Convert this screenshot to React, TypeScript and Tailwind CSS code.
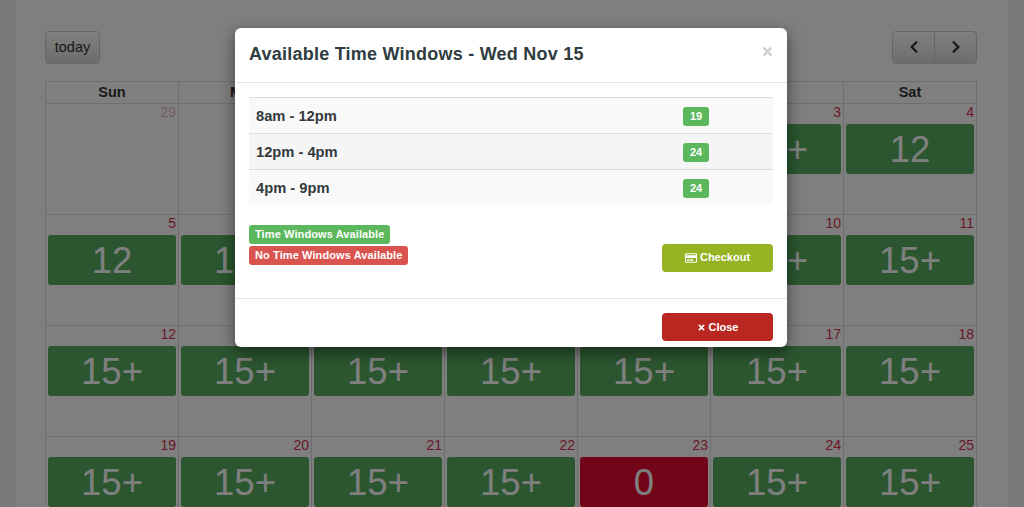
import { FaChevronLeft, FaChevronRight, FaRegCreditCard, FaTimes } from "react-icons/fa";

const heads = ["Sun", "Mon", "Tue", "Wed", "Thu", "Fri", "Sat"];
type Cell = { d: number; v?: string; other?: boolean };
const rows: Cell[][] = [
  [{ d: 29, other: true }, { d: 30, other: true }, { d: 31, other: true }, { d: 1, v: "15+" }, { d: 2, v: "15+" }, { d: 3, v: "15+" }, { d: 4, v: "12" }],
  [{ d: 5, v: "12" }, { d: 6, v: "15+" }, { d: 7, v: "15+" }, { d: 8, v: "15+" }, { d: 9, v: "15+" }, { d: 10, v: "15+" }, { d: 11, v: "15+" }],
  [12, 13, 14, 15, 16, 17, 18].map((d) => ({ d, v: "15+" })),
  [19, 20, 21, 22, 23, 24, 25].map((d) => ({ d, v: d === 23 ? "0" : "15+" })),
];
const windows = [
  { t: "8am - 12pm", n: 19, bg: "bg-[#f9f9f9]", h: "h-[36px] border-b border-[#dddddd]" },
  { t: "12pm - 4pm", n: 24, bg: "bg-[#f5f5f5]", h: "h-[36px] border-b border-[#dddddd]" },
  { t: "4pm - 9pm", n: 24, bg: "bg-[#f9f9f9]", h: "h-[35px]" },
];

export default function App() {
  return (
    <div className="relative h-[507px] w-[1024px] overflow-hidden bg-[#f4f4f4] font-['Liberation_Sans',Arial,sans-serif]">
      <div className="mx-4 h-full bg-white pt-[31px] pr-[31px] pl-[29px]">
        <div className="flex h-[32px] items-start justify-between">
          <button className="h-[32px] w-[55px] rounded-[4px] border border-[#cccccc] bg-gradient-to-b from-[#ffffff] to-[#dcdcdc] pt-[1px] text-[14.5px] text-[#333333] shadow-[0_1px_1px_rgba(0,0,0,0.15)]">
            today
          </button>
          <div className="flex h-[32px] w-[85px] rounded-[4px] border border-[#cccccc] bg-gradient-to-b from-[#ffffff] to-[#dcdcdc] text-[#333333] shadow-[0_1px_1px_rgba(0,0,0,0.15)]">
            <span className="flex flex-1 items-center justify-center border-r border-[#cccccc]">
              <FaChevronLeft className="h-[14px] w-[14px]" />
            </span>
            <span className="flex flex-1 items-center justify-center">
              <FaChevronRight className="h-[14px] w-[14px]" />
            </span>
          </div>
        </div>
        <div className="mt-[18px] w-[932px] border-l border-[#dddddd]">
          <div className="grid h-[23px] grid-cols-7 border-y border-[#dddddd]">
            {heads.map((h) => (
              <div key={h} className="border-r border-[#dddddd] text-center text-[14.5px] leading-[21px] font-bold text-[#333333]">
                {h}
              </div>
            ))}
          </div>
          {rows.map((r, i) => (
            <div key={i} className="grid h-[111px] grid-cols-7 border-b border-[#dddddd]">
              {r.map((c) => (
                <div key={c.d} className="border-r border-[#dddddd] px-[2px]">
                  <div className={`h-[20px] text-right text-[14px] leading-[17px] ${c.other ? "text-[#efb4c0]" : "text-[#d6304f]"}`}>
                    {c.d}
                  </div>
                  {c.v && (
                    <div
                      className={`flex h-[50px] items-center justify-center rounded-[3px] pt-[2px] text-[36.5px] leading-none text-white ${
                        c.v === "0" ? "bg-[#e40a30]" : "bg-[#57ac5f]"
                      }`}
                    >
                      {c.v}
                    </div>
                  )}
                </div>
              ))}
            </div>
          ))}
        </div>
      </div>

      <div className="absolute inset-0 bg-black/50" />

      <div className="absolute top-[28px] left-[235px] flex h-[319px] w-[552px] flex-col rounded-[6px] bg-white shadow-[0_5px_15px_rgba(0,0,0,0.5)]">
        <div className="relative h-[55px] shrink-0 border-b border-[#e5e5e5] pt-[15px] pl-[14px]">
          <h4 className="text-[18px] leading-[23px] font-bold tracking-[0.23px] text-[#2f3c40]">Available Time Windows - Wed Nov 15</h4>
          <FaTimes className="absolute top-[17px] right-[13px] h-[13px] w-[13px] text-[#cfcfcf]" />
        </div>
        <div className="flex-1 px-[14px] pt-[14px]">
          <div className="border-t border-[#dddddd]">
            {windows.map((w) => (
              <div key={w.t} className={`flex items-center ${w.h} ${w.bg}`}>
                <span className="w-[434px] pt-[1px] pl-[7px] text-[14.7px] font-bold text-[#333a3e]">{w.t}</span>
                <span className="mt-[1px] flex h-[19px] w-[26px] items-center justify-center rounded-[3px] bg-[#5cb85c] text-[11px] font-bold text-white">
                  {w.n}
                </span>
              </div>
            ))}
          </div>
          <div className="mt-[20px] flex items-start justify-between">
            <div className="flex flex-col items-start gap-[2px]">
              <span className="flex h-[19px] items-center rounded-[3px] bg-[#5cb85c] px-[6px] text-[11px] font-bold tracking-[0.1px] text-white">
                Time Windows Available
              </span>
              <span className="flex h-[19px] items-center rounded-[3px] bg-[#d9534f] px-[6px] text-[11px] font-bold tracking-[0.1px] text-white">
                No Time Windows Available
              </span>
            </div>
            <button className="mt-[19px] flex h-[28px] w-[111px] items-center justify-center gap-[3px] rounded-[4px] bg-[#95b322] pb-[1px] text-[11px] font-bold text-white">
              <FaRegCreditCard className="h-[12px] w-[12px]" />
              Checkout
            </button>
          </div>
        </div>
        <div className="flex h-[49px] shrink-0 items-start justify-end border-t border-[#e5e5e5] pt-[14px] pr-[14px]">
          <button className="flex h-[28px] w-[111px] items-center justify-center gap-[3px] rounded-[4px] bg-[#b92720] text-[11px] font-bold text-white">
            <FaTimes className="h-[9px] w-[9px]" />
            Close
          </button>
        </div>
      </div>
    </div>
  );
}
